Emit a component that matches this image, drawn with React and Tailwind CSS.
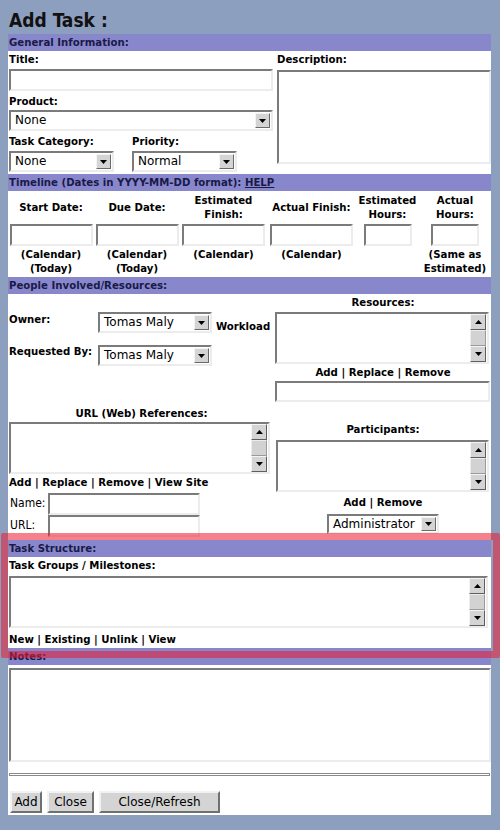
const CB = "font-['DejaVu_Sans_Condensed','DejaVu_Sans',sans-serif] font-stretch-condensed font-bold text-[11.3px] leading-[14px] text-black";
const CR = "font-['DejaVu_Sans_Condensed','DejaVu_Sans',sans-serif] font-stretch-condensed text-[12px] leading-[14px] text-black";
const R = "font-['DejaVu_Sans',sans-serif] text-[12px] text-black";
const INSET = "border-2 border-t-[#7b7b7b] border-l-[#7b7b7b] border-b-[#ececec] border-r-[#ececec]";

function Header({ children }) {
  return (
    <div className="h-[17px] bg-[#8887cc] pl-[1px] text-[#1a1a48] font-['DejaVu_Sans_Condensed','DejaVu_Sans',sans-serif] font-stretch-condensed font-bold text-[11.3px] leading-[17px] whitespace-nowrap">
      {children}
    </div>
  );
}

function TextBox({ className }) {
  return <div className={`${INSET} bg-white ${className}`} />;
}

function Tri({ up }) {
  return (
    <svg width="7" height="4" viewBox="0 0 7 4">
      {up ? <path d="M0 4h7L3.5 0z" fill="#000" /> : <path d="M0 0h7L3.5 4z" fill="#000" />}
    </svg>
  );
}

function DropBtn() {
  return (
    <div className="w-[15px] my-[1px] mr-[1px] bg-[#d4d4d4] border border-t-[#f4f4f4] border-l-[#f4f4f4] border-b-[#6a6a6a] border-r-[#6a6a6a] flex items-center justify-center">
      <Tri />
    </div>
  );
}

function Select({ value, className }) {
  return (
    <div className={`${INSET} bg-white flex items-stretch ${className}`}>
      <div className={`flex-1 pl-[4px] ${R} leading-[17px] whitespace-nowrap`}>{value}</div>
      <DropBtn />
    </div>
  );
}

function ScrollBtn({ up }) {
  return (
    <div className="h-[16px] bg-[#d4d4d4] border border-t-[#f4f4f4] border-l-[#f4f4f4] border-b-[#5e5e5e] border-r-[#5e5e5e] flex items-center justify-center">
      <Tri up={up} />
    </div>
  );
}

function ListBox({ className }) {
  return (
    <div className={`${INSET} bg-white flex justify-end ${className}`}>
      <div className="w-[16px] mr-[1px] flex flex-col">
        <ScrollBtn up />
        <div className="flex-1 bg-[#d2d2d2] border border-t-[#ececec] border-l-[#ececec] border-b-[#9a9a9a] border-r-[#9a9a9a]" />
        <ScrollBtn />
      </div>
    </div>
  );
}

function Btn({ children, className }) {
  return (
    <div className={`h-[22px] bg-[#d4d4d4] border-2 border-t-[#f2f2f2] border-l-[#f2f2f2] border-b-[#707070] border-r-[#707070] flex items-center justify-center ${R} leading-[18px] ${className}`}>
      {children}
    </div>
  );
}

export default function App() {
  return (
    <div className="min-h-[830px] bg-[#8d9fbf] px-[8px]">
      <div className="h-[34px] pt-[8px] pl-[1px] font-['DejaVu_Sans_Condensed','DejaVu_Sans',sans-serif] font-stretch-condensed font-bold text-[19px] leading-[24px] text-[#111111]">
        Add Task :
      </div>

      <div className="w-[483px] bg-white pb-[2px]">
        {/* General Information */}
        <Header>General Information:</Header>
        <div className="grid grid-cols-[267px_216px] h-[123px]">
          <div>
            <div className={`h-[18px] pt-[2px] pl-[1px] ${CB}`}>Title:</div>
            <TextBox className="ml-[1px] w-[264px] h-[22px]" />
            <div className={`h-[19px] pt-[4px] pl-[1px] ${CB}`}>Product:</div>
            <Select value="None" className="ml-[1px] w-[264px] h-[21px]" />
            <div className="grid grid-cols-[123px_1fr]">
              <div>
                <div className={`h-[20px] pt-[4px] pl-[1px] ${CB}`}>Task Category:</div>
                <Select value="None" className="ml-[1px] w-[105px] h-[21px]" />
              </div>
              <div>
                <div className={`h-[20px] pt-[4px] pl-[1px] ${CB}`}>Priority:</div>
                <Select value="Normal" className="ml-[1px] w-[105px] h-[21px]" />
              </div>
            </div>
          </div>
          <div>
            <div className={`h-[19px] pt-[2px] pl-[2px] ${CB}`}>Description:</div>
            <TextBox className="ml-[2px] w-[214px] h-[94px]" />
          </div>
        </div>

        {/* Timeline */}
        <Header>
          Timeline (Dates in YYYY-MM-DD format): <span className="underline">HELP</span>
        </Header>
        <div className={`grid grid-cols-[86px_86px_87px_89px_63px_72px] text-center ${CB}`}>
          <div className="h-[33px] flex items-center justify-center">Start Date:</div>
          <div className="h-[33px] flex items-center justify-center">Due Date:</div>
          <div className="h-[33px] flex items-center justify-center">Estimated<br />Finish:</div>
          <div className="h-[33px] flex items-center justify-center">Actual Finish:</div>
          <div className="h-[33px] flex items-center justify-center">Estimated<br />Hours:</div>
          <div className="h-[33px] flex items-center justify-center">Actual<br />Hours:</div>

          <div className="flex justify-center"><TextBox className="w-[83px] h-[22px]" /></div>
          <div className="flex justify-center"><TextBox className="w-[83px] h-[22px]" /></div>
          <div className="flex justify-center"><TextBox className="w-[83px] h-[22px]" /></div>
          <div className="flex justify-center"><TextBox className="w-[83px] h-[22px]" /></div>
          <div className="flex justify-center"><TextBox className="w-[48px] h-[22px]" /></div>
          <div className="flex justify-center"><TextBox className="w-[48px] h-[22px]" /></div>

          <div className="h-[31px] pt-[2px]">(Calendar)<br />(Today)</div>
          <div className="h-[31px] pt-[2px]">(Calendar)<br />(Today)</div>
          <div className="h-[31px] pt-[2px]">(Calendar)</div>
          <div className="h-[31px] pt-[2px]">(Calendar)</div>
          <div className="h-[31px] pt-[2px]"></div>
          <div className="h-[31px] pt-[2px]">(Same as<br />Estimated)</div>
        </div>

        {/* People */}
        <Header>People Involved/Resources:</Header>
        <div className="grid grid-cols-[267px_216px] h-[246px]">
          <div>
            <div className="mt-[18px] flex h-[21px]">
              <div className={`w-[90px] pl-[1px] pt-[1px] ${CB}`}>Owner:</div>
              <Select value="Tomas Maly" className="w-[114px] h-[21px]" />
              <div className={`ml-[4px] pt-[8px] ${CB}`}>Workload</div>
            </div>
            <div className="mt-[12px] flex h-[21px]">
              <div className={`w-[90px] pl-[1px] ${CB}`}>Requested By:</div>
              <Select value="Tomas Maly" className="w-[114px] h-[21px]" />
            </div>
            <div className={`mt-[41px] h-[15px] text-center ${CB}`}>URL (Web) References:</div>
            <ListBox className="ml-[1px] w-[261px] h-[52px]" />
            <div className={`h-[19px] pt-[2px] pl-[1px] ${CB}`}>Add | Replace | Remove | View Site</div>
            <div className="flex h-[22px]">
              <div className={`w-[40px] pl-[2px] pt-[3px] ${CR}`}>Name:</div>
              <TextBox className="w-[152px] h-[22px]" />
            </div>
            <div className="flex h-[22px]">
              <div className={`w-[40px] pl-[2px] pt-[3px] ${CR}`}>URL:</div>
              <TextBox className="w-[152px] h-[22px]" />
            </div>
          </div>
          <div>
            <div className={`h-[18px] pt-[2px] text-center ${CB}`}>Resources:</div>
            <ListBox className="w-[214px] h-[52px]" />
            <div className={`h-[17px] pt-[2px] text-center ${CB}`}>Add | Replace | Remove</div>
            <TextBox className="w-[215px] h-[21px]" />
            <div className={`h-[38px] pt-[21px] text-center ${CB}`}>Participants:</div>
            <ListBox className="ml-[1px] w-[213px] h-[52px]" />
            <div className={`h-[22px] pt-[4px] text-center ${CB}`}>Add | Remove</div>
            <div className="flex justify-center">
              <Select value="Administrator" className="w-[112px] h-[20px]" />
            </div>
          </div>
        </div>

        {/* Task Structure (highlighted) */}
        <div className="relative">
          <Header>Task Structure:</Header>
          <div className={`h-[19px] pt-[2px] pl-[1px] ${CB}`}>Task Groups / Milestones:</div>
          <ListBox className="ml-[1px] w-[479px] h-[52px]" />
          <div className={`h-[20px] pt-[5px] pl-[1px] ${CB}`}>New | Existing | Unlink | View</div>
          <div className="absolute -left-[7px] -top-[7px] -right-[9px] -bottom-[10px] border-[7px] border-[rgba(235,25,45,0.55)] rounded-[2px] pointer-events-none z-10" />
        </div>

        {/* Notes */}
        <Header>Notes:</Header>
        <TextBox className="mt-[3px] ml-[1px] w-[482px] h-[94px]" />
        <div className="mt-[11px] ml-[1px] w-[481px] h-[3px] border border-[#8a8a8a] bg-white" />
        <div className="mt-[15px] ml-[2px] flex gap-[5px]">
          <Btn className="w-[32px]">Add</Btn>
          <Btn className="w-[47px]">Close</Btn>
          <Btn className="w-[121px]">Close/Refresh</Btn>
        </div>
      </div>
    </div>
  );
}
